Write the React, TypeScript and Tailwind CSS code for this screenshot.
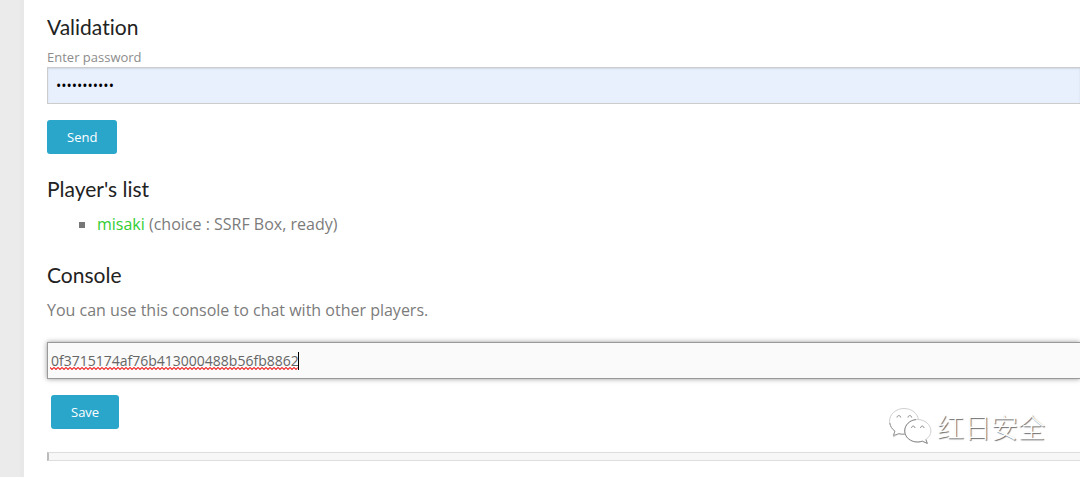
import React, { useId, useState } from 'react';

function Heading({ children }: { children: React.ReactNode }) {
  return (
    <h3 className="font-['Lato','Open_Sans',sans-serif] text-[21px] leading-8 text-[#222222] [font-variant-ligatures:none]">
      {children}
    </h3>
  );
}

function ActionButton({ children }: { children: React.ReactNode }) {
  return (
    <button
      type="button"
      className="h-[34px] rounded-[3px] bg-[#2ba6cb] px-5 text-[13px] leading-4 text-white"
    >
      {children}
    </button>
  );
}

function SpellingMark() {
  const id = useId();
  return (
    <svg className="h-[3px] w-0 min-w-full" aria-hidden="true">
      <defs>
        <pattern id={id} width="4" height="3" patternUnits="userSpaceOnUse">
          <path d="M-1 .5 L0 .5 L2 2.5 L4 .5 L5 .5" fill="none" stroke="#f02828" strokeWidth="1.1" />
        </pattern>
      </defs>
      <rect width="100%" height="3" fill={`url(#${id})`} />
    </svg>
  );
}

function ChatLogo() {
  return (
    <svg
      viewBox="0 0 44 39"
      className="h-[39px] w-11"
      fill="#ffffff"
      stroke="#999999"
      strokeWidth="1"
      strokeLinejoin="round"
      aria-hidden="true"
    >
      <path
        d="M16 1.5C8 1.5 1.5 7.2 1.5 14.2c0 4.2 2 7.7 5.4 9.9L5.4 30l5.4-3.3c1.9.5 3.7.7 6 .5C26 27 31 21 30.5 13 29.8 6.5 23.7 1.5 16 1.5Z"
        stroke="#d0d0d0"
      />
      <path d="M1.8 16c.6 3.4 2.3 6.200 5.1 8.100L5.400 28.500l5.400-1.800c1.900.5 3.700.7 6 .5" fill="none" />
      <path
        d="M29.500 12.500c-7.400 0-12.800 5.200-12.800 11.500S22.300 35 29.500 35c1.800 0 3.400-.3 4.800-.8l5 2.200-1.400-3.900c3-2.200 5-5 5-8.500 0-6.300-6-11.500-13.400-11.500Z"
        stroke="#d0d0d0"
      />
      <path
        d="M28 12.600c-6.500.6-11.300 5.500-11.300 11.400S22.300 35 29.500 35c1.800 0 3.400-.3 4.800-.8l5 2.200-1.400-3.900"
        fill="none"
        stroke="#8c8c8c"
      />
      <path
        d="M9 10.500c.2-2.500 3.500-2.500 3.700 0M20 10.500c.2-2.500 3.500-2.500 3.700 0M23.500 21c.2-2.500 3.300-2.500 3.500 0M32.500 21c.2-2.500 3.300-2.500 3.500 0"
        fill="none"
        stroke="#888888"
      />
    </svg>
  );
}

export default function App() {
  const [password, setPassword] = useState('misaki12345');
  const [message, setMessage] = useState('0f3715174af76b413000488b56fb8862');

  return (
    <div className="relative flex min-h-screen overflow-hidden bg-white font-['Open_Sans',sans-serif] text-[#7b7b7b]">
      <div className="w-6 shrink-0 border-r-4 border-[#e8e8e8] bg-[#ebebeb]" />
      <main className="min-w-0 flex-1 pt-[11px] pb-4 pl-[23px]">
        <section>
          <Heading>Validation</Heading>
          <label htmlFor="password" className="mt-1 block text-[13px] leading-5 text-[#8c8c8c]">
            Enter password
          </label>
          <input
            id="password"
            type="password"
            value={password}
            onChange={(e) => setPassword(e.target.value)}
            className="block h-[37px] w-full border border-r-0 border-[#cccccc] bg-[#e8effd] px-2 text-sm text-black shadow-[inset_0_1px_2px_rgba(0,0,0,0.1)] outline-none"
          />
          <div className="mt-4 flex">
            <ActionButton>Send</ActionButton>
          </div>
        </section>

        <section className="mt-[19px]">
          <Heading>Player's list</Heading>
          <ul className="mt-1 list-[square] pl-[50px] text-base leading-[30px] marker:text-[#777777]">
            <li>
              <span className="text-[#32cd32]">misaki</span> (choice : SSRF Box, ready)
            </li>
          </ul>
        </section>

        <section className="mt-5">
          <Heading>Console</Heading>
          <p className="mt-[5px] text-base leading-7">You can use this console to chat with other players.</p>
          <div className="relative mt-[18px]">
            <input
              type="text"
              aria-label="Message"
              value={message}
              spellCheck={false}
              onChange={(e) => setMessage(e.target.value)}
              className="block h-[37px] w-full border border-r-0 border-[#999999] bg-[#fafafa] px-[3px] text-sm text-[#666666] shadow-[0_0_5px_#999999] outline-none"
            />
            <div className="pointer-events-none absolute inset-y-0 left-[3px] flex items-center">
              <div className="flex h-[18px] flex-col justify-end border-r border-black text-sm">
                <span className="invisible h-0">{message}</span>
                <SpellingMark />
              </div>
            </div>
          </div>
          <div className="mt-4 flex pl-1">
            <ActionButton>Save</ActionButton>
          </div>
          <div className="mt-[23px] h-[9px] border border-r-0 border-l-2 border-[#dddddd] border-l-[#bbbbbb] bg-[#f7f7f7]" />
        </section>
      </main>

      <div className="absolute right-[35px] bottom-[31px] flex items-center gap-[5px]">
        <ChatLogo />
        <span className="font-['Noto_Sans_CJK_SC',sans-serif] text-[27px] leading-9 font-light text-white [text-shadow:1px_1px_1px_#666666]">
          红日安全
        </span>
      </div>
    </div>
  );
}
